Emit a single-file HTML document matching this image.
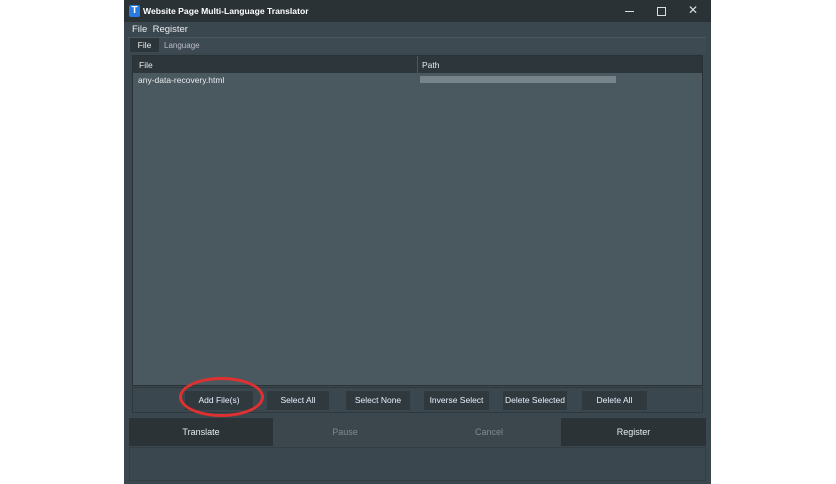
<!DOCTYPE html>
<html><head><style>
body{margin:0;width:836px;height:484px;background:#fff;position:relative;overflow:hidden;font-family:"Liberation Sans",sans-serif;color:#e8ecee}
.a{position:absolute}
.b{position:absolute;top:391px;height:19px;background:#2f393e;font-size:8.5px;text-align:center;line-height:19px;color:#eef}
</style></head><body>
<div class="a" style="left:124px;top:0;width:587px;height:484px;background:#3b474e"></div>
<div class="a" style="left:124px;top:0;width:587px;height:22px;background:#2a3236"></div>
<div class="a" style="left:129px;top:5px;width:11px;height:12px;background:#2a7be0;border-radius:2px;color:#fff;font-size:10px;font-weight:bold;text-align:center;line-height:12px">T</div>
<div class="a" style="left:143px;top:6px;font-size:8.6px;font-weight:bold;color:#fff">Website Page Multi-Language Translator</div>
<div class="a" style="left:625px;top:11px;width:9px;height:1px;background:#ddd"></div>
<div class="a" style="left:657px;top:7px;width:7px;height:7px;border:1px solid #ddd"></div>
<div class="a" style="left:688px;top:3px;font-size:12px;color:#ddd">✕</div>
<div class="a" style="left:132px;top:24px;font-size:9.5px">File&nbsp;&nbsp;Register</div>
<div class="a" style="left:128px;top:37px;width:578px;height:15px;background:#3d4a51;border-top:1px solid #4a575e"></div>
<div class="a" style="left:130px;top:38px;width:29px;height:14px;background:#2c353a;font-size:8.5px;text-align:center;line-height:14px">File</div>
<div class="a" style="left:164px;top:41px;font-size:8px;color:#bbc">Language</div>
<div class="a" style="left:132px;top:55px;width:571px;height:331px;background:#4a5860;border:1px solid #2a3236;box-sizing:border-box"></div>
<div class="a" style="left:133px;top:56px;width:569px;height:17px;background:#2d363b"></div>
<div class="a" style="left:417px;top:56px;width:1px;height:17px;background:#555"></div>
<div class="a" style="left:139px;top:60px;font-size:8.5px">File</div>
<div class="a" style="left:422px;top:60px;font-size:8.5px">Path</div>
<div class="a" style="left:138px;top:75px;font-size:8.5px">any-data-recovery.html</div>
<div class="a" style="left:420px;top:76px;width:196px;height:7px;background:#8a979d;opacity:.7"></div>
<div class="a" style="left:132px;top:387px;width:571px;height:26px;border:1px solid #2f383d;box-sizing:border-box"></div>
<div class="b" style="left:185px;width:68px">Add File(s)</div>
<div class="b" style="left:267px;width:62px">Select All</div>
<div class="b" style="left:346px;width:64px">Select None</div>
<div class="b" style="left:424px;width:65px">Inverse Select</div>
<div class="b" style="left:503px;width:64px">Delete Selected</div>
<div class="b" style="left:582px;width:65px">Delete All</div>
<div class="a" style="left:179px;top:377px;width:85px;height:40px;border:3px solid #e03030;border-radius:50%;box-sizing:border-box"></div>
<div class="a" style="left:129px;top:418px;width:577px;height:28px;background:#3c474d"></div>
<div class="a" style="left:129px;top:418px;width:144px;height:28px;background:#2b3337;font-size:9px;text-align:center;line-height:28px">Translate</div>
<div class="a" style="left:273px;top:418px;width:144px;height:28px;font-size:9px;text-align:center;line-height:28px;color:#7d8a90">Pause</div>
<div class="a" style="left:417px;top:418px;width:144px;height:28px;font-size:9px;text-align:center;line-height:28px;color:#7d8a90">Cancel</div>
<div class="a" style="left:561px;top:418px;width:145px;height:28px;background:#2b3337;font-size:9px;text-align:center;line-height:28px">Register</div>
<div class="a" style="left:129px;top:447px;width:577px;height:34px;border:1px solid #333d42;box-sizing:border-box"></div>
</body></html>
